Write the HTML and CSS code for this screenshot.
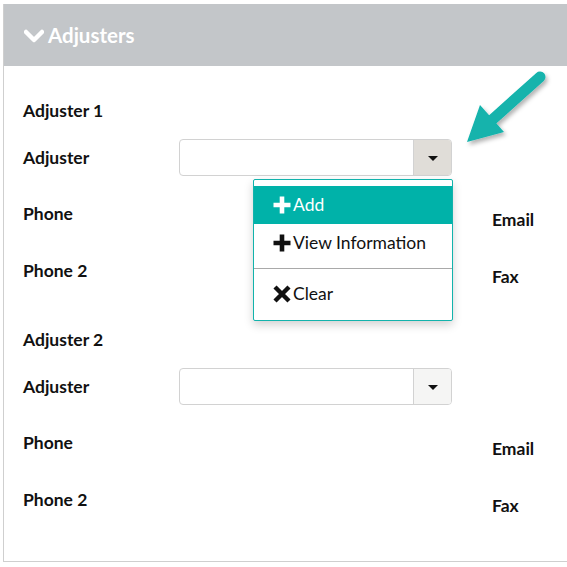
FILE: index.html
```html
<!DOCTYPE html>
<html lang="en">
<head>
    <meta charset="UTF-8">
    <title>Adjusters</title>
    <link rel="stylesheet" href="styles.css">
</head>
<body>

<div class="panel">
    <!-- panel header -->
    <div class="panel-heading">
        <svg class="chevron" width="20" height="14" viewBox="0 0 20 14">
            <path d="M2 3 L10 11 L18 3" fill="none" stroke="#fff" stroke-width="4.5" stroke-linecap="round" stroke-linejoin="round"/>
        </svg>
        <span>Adjusters</span>
    </div>

    <div class="panel-body">
        <!-- adjuster 1 -->
        <div class="group">
            <div class="group-title">Adjuster 1</div>
            <div class="row row-select">
                <label class="label">Adjuster</label>
                <div class="select open">
                    <div class="select-text"></div>
                    <div class="select-btn"><span class="caret"></span></div>
                    <ul class="menu">
                        <li class="menu-item active">
                            <svg width="20" height="20" viewBox="0 0 20 20"><path d="M10 1.5 V18.5 M1.5 10 H18.5" stroke="#fff" stroke-width="4.6"/></svg>
                            <span>Add</span>
                        </li>
                        <li class="menu-item">
                            <svg width="20" height="20" viewBox="0 0 20 20"><path d="M10 1.5 V18.5 M1.5 10 H18.5" stroke="#111" stroke-width="4.6"/></svg>
                            <span>View Information</span>
                        </li>
                        <li class="divider"></li>
                        <li class="menu-item">
                            <svg width="20" height="20" viewBox="0 0 20 20"><path d="M3 3 L17 17 M17 3 L3 17" stroke="#111" stroke-width="4.4"/></svg>
                            <span>Clear</span>
                        </li>
                    </ul>
                </div>
            </div>
            <div class="row row-phone">
                <label class="label">Phone</label>
                <div class="value"></div>
                <label class="label label-right">Email</label>
            </div>
            <div class="row row-phone2">
                <label class="label">Phone 2</label>
                <div class="value"></div>
                <label class="label label-right">Fax</label>
            </div>
        </div>

        <!-- adjuster 2 -->
        <div class="group group-second">
            <div class="group-title">Adjuster 2</div>
            <div class="row row-select">
                <label class="label">Adjuster</label>
                <div class="select">
                    <div class="select-text"></div>
                    <div class="select-btn"><span class="caret"></span></div>
                </div>
            </div>
            <div class="row row-phone">
                <label class="label">Phone</label>
                <div class="value"></div>
                <label class="label label-right">Email</label>
            </div>
            <div class="row row-phone2">
                <label class="label">Phone 2</label>
                <div class="value"></div>
                <label class="label label-right">Fax</label>
            </div>
        </div>
    </div>
</div>

<!-- callout arrow -->
<svg class="callout" width="100" height="90" viewBox="0 0 100 90">
    <defs>
        <filter id="shadow" x="-20%" y="-20%" width="150%" height="150%">
            <feDropShadow dx="2" dy="3" stdDeviation="2" flood-color="#000" flood-opacity="0.3"/>
        </filter>
    </defs>
    <g filter="url(#shadow)" fill="#12b3ac">
        <path d="M88 15 L40 58" stroke="#12b3ac" stroke-width="11" stroke-linecap="round"/>
        <path d="M15 80 L28 43 L52 70 Z"/>
    </g>
</svg>

</body>
</html>
```

FILE: styles.css
```css
/* general */
body {
    font-family: 'Lato', 'Liberation Sans', sans-serif;
    margin: 0;
    padding: 0;
    background: #fff;
    color: #111;
    overflow: hidden;
}

/* panel */
.panel {
    margin: 4px 0 0 3px;
    width: 580px;
    height: 558px;
    border: 1px solid #cfcfcf;
    border-top: none;
    border-right: none;
    box-sizing: border-box;
}

.panel-heading {
    background-color: #c3c6c9;
    height: 62px;
    display: flex;
    align-items: center;
    padding-left: 20px;
    color: #fff;
    font-size: 20.5px;
    font-weight: 700;
}

.chevron {
    margin-right: 4px;
    margin-top: 1px;
}

.panel-body {
    padding: 24px 0 0 19px;
    position: relative;
}

/* groups and rows */
.group-second {
    margin-top: 21px;
}

.group-title {
    height: 40px;
    display: flex;
    align-items: center;
    font-size: 17.5px;
    font-weight: 700;
}

.row {
    display: flex;
    align-items: center;
}

.row-select {
    height: 54px;
}

.row-phone {
    height: 58px;
}

.row-phone2 {
    height: 56px;
}

.label {
    width: 156px;
    font-size: 17.5px;
    font-weight: 700;
}

.value {
    width: 273px;
}

.label-right {
    width: auto;
    margin-left: 40px;
    margin-top: 12px;
}

/* select box */
.select {
    position: relative;
    display: flex;
    width: 273px;
    height: 37px;
    border: 1px solid #d2d2d2;
    border-radius: 4px;
    box-sizing: border-box;
}

.select-text {
    flex: 1;
}

.select-btn {
    width: 37px;
    border-left: 1px solid #d2d2d2;
    background-color: #f5f5f4;
    border-radius: 0 3px 3px 0;
    display: flex;
    align-items: center;
    justify-content: center;
}

.select.open .select-btn {
    background-color: #e0ddd8;
}

.caret {
    width: 0;
    height: 0;
    border-left: 5px solid transparent;
    border-right: 5px solid transparent;
    border-top: 5px solid #111;
    margin-top: 2px;
}

/* dropdown menu */
.menu {
    position: absolute;
    left: 73px;
    top: 39px;
    width: 200px;
    margin: 0;
    padding: 6px 0 7px;
    list-style: none;
    background: #fff;
    border: 1px solid #12b3ac;
    border-radius: 2px;
    box-sizing: border-box;
    box-shadow: 0 4px 10px rgba(0, 0, 0, 0.18);
    z-index: 5;
}

.menu-item {
    height: 38px;
    display: flex;
    align-items: center;
    padding-left: 18px;
    font-size: 17.5px;
    color: #111;
}

.menu-item svg {
    margin-right: 1px;
}

.menu-item.active {
    background-color: #00b2a9;
    color: #fff;
}

.divider {
    height: 1px;
    background-color: #a9a9a9;
    margin: 6px 0;
}

/* arrow callout */
.callout {
    position: absolute;
    left: 452px;
    top: 62px;
}
```
